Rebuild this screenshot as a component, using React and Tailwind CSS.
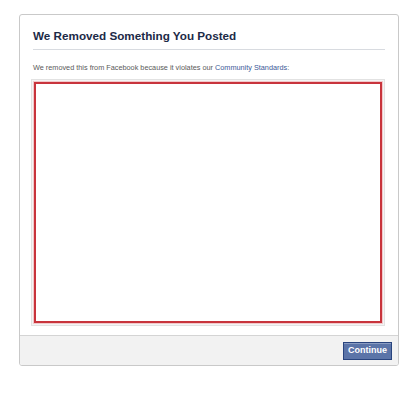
export default function App() {
  return (
    <div className="w-[416px] h-[400px] bg-white pt-[14px] pl-[19px] font-['Liberation_Sans',Arial,sans-serif]">
      <div className="w-[380px] h-[352px] flex flex-col border border-[#c9c9c9] rounded-[3px] bg-white overflow-hidden">
        <div className="flex-1 px-[13px] pt-[13px]">
          <h1 className="text-[11.7px] leading-[16px] font-bold text-[#1c2a47] pb-[5px] border-b border-[#d8dbe0]">
            We Removed Something You Posted
          </h1>
          <p className="mt-[13px] text-[7.3px] leading-[10px] text-[#5a5a5a]">
            We removed this from Facebook because it violates our{' '}
            <span className="text-[#3b5998]">Community Standards</span>:
          </p>
          <div className="mt-[6px] -ml-[2px] w-[354px] h-[247px] border border-[#e2e2e2] bg-[#f4f4f4] p-[2px]">
            <div className="w-full h-full border-2 border-[#c8343c] bg-white shadow-[0_0_0_1px_#f2c9cb]" />
          </div>
        </div>
        <div className="h-[30px] bg-[#f2f2f2] border-t border-[#d4d4d4] flex items-center justify-end pr-[6px]">
          <button className="w-[49px] h-[18px] bg-[#5b74a8] border border-[#29447e] text-white text-[9px] font-bold shadow-[inset_0_1px_0_#8a9cc2]">
            Continue
          </button>
        </div>
      </div>
    </div>
  )
}
